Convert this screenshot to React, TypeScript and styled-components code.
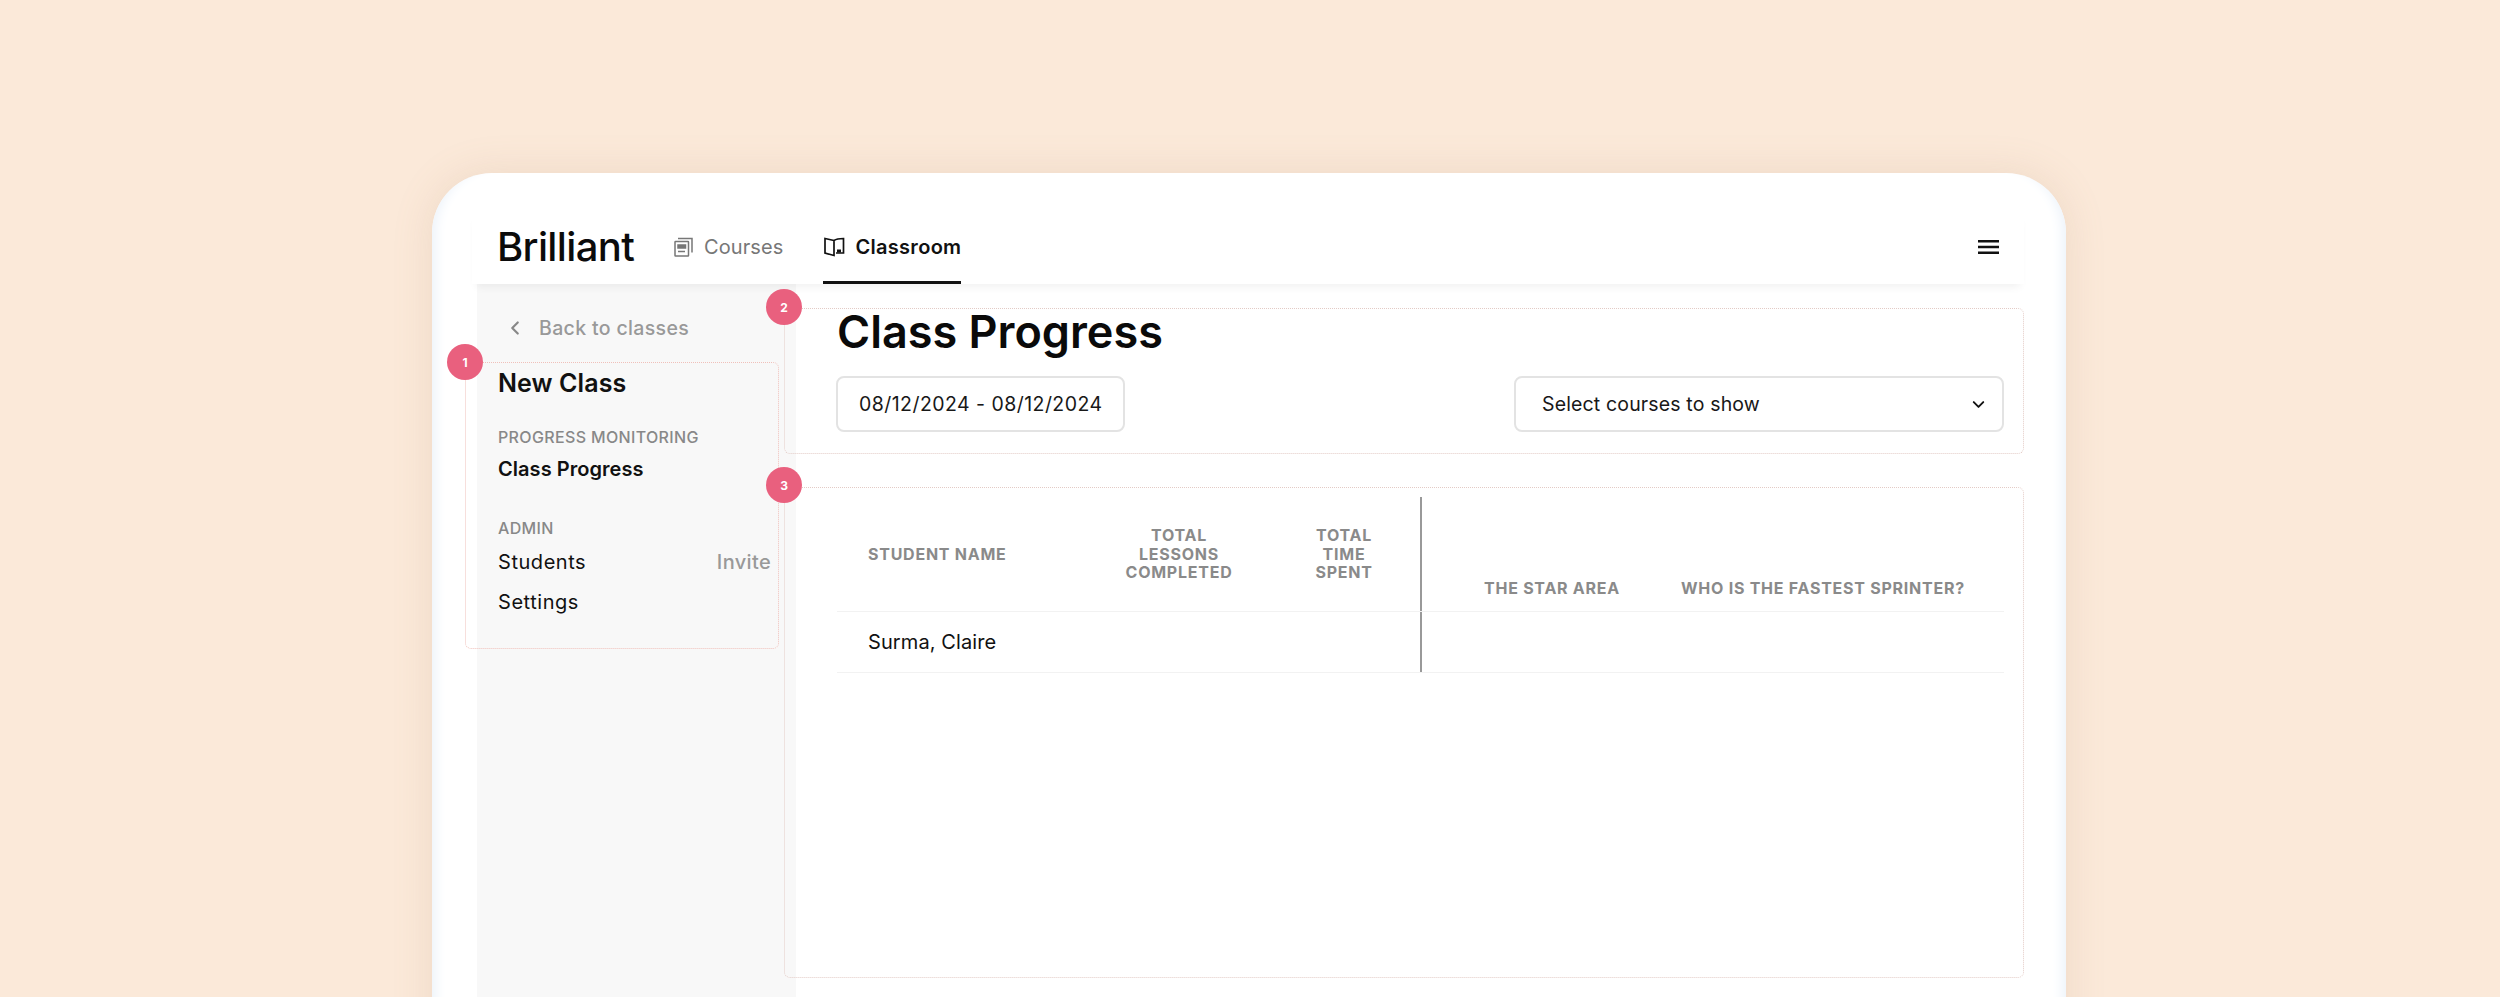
import React from "react";
import styled, { createGlobalStyle } from "styled-components";
import { ChevronLeft, ChevronDown } from "lucide-react";

const Global = createGlobalStyle`
  html, body { margin: 0; padding: 0; background: #fbe9d9; }
  * { box-sizing: border-box; }
  body { font-family: Inter, "Liberation Sans", sans-serif; color: #111; }
`;

const Page = styled.div`
  height: 997px;
  overflow: hidden;
  padding: 173px 434px 0 432px;
  background: #fbe9d9;
`;

const Card = styled.div`
  height: 1000px;
  padding: 37px 42px 0 40px;
  background: #fff;
  border-radius: 60px 60px 0 0;
  box-shadow: 0 0 40px rgba(170, 130, 100, 0.16), inset 14px 0 12px -10px #edf3fa, inset -14px 0 12px -10px #edf3fa;
`;

const Header = styled.header`
  position: relative;
  z-index: 1;
  height: 74px;
  display: flex;
  align-items: stretch;
  padding: 0 25px;
  background: #fff;
  box-shadow: 0 7px 8px -4px rgba(0, 0, 0, 0.06);
`;

const Logo = styled.div`
  align-self: center;
  width: 135px;
  margin-right: 42px;
  font-size: 40px;
  line-height: 1;
  font-weight: 500;
  letter-spacing: -0.65px;
  color: #0b0b0b;
`;

const Tab = styled.div<{ $active?: boolean }>`
  display: flex;
  align-items: center;
  gap: ${(p) => (p.$active ? 10 : 11)}px;
  margin-right: 40px;
  font-size: 20px;
  letter-spacing: ${(p) => (p.$active ? 0.3 : 0.1)}px;
  font-weight: ${(p) => (p.$active ? 600 : 400)};
  color: ${(p) => (p.$active ? "#111" : "#777")};
  padding-top: 3px;
  border-bottom: 3px solid ${(p) => (p.$active ? "#111" : "transparent")};
`;

const Menu = styled.svg`
  align-self: center;
  margin-left: auto;
  width: 21px;
  height: 16px;
`;

const Body = styled.div`
  display: flex;
  align-items: stretch;
  height: 800px;
  padding-left: 5px;
`;

const Sidebar = styled.aside`
  flex: 0 0 319px;
  padding-top: 31px;
  background: #f8f8f8;
`;

const Back = styled.div`
  display: flex;
  align-items: center;
  gap: 13px;
  height: 26px;
  padding-left: 27px;
  font-size: 19.5px;
  letter-spacing: 0.35px;
  font-weight: 500;
  color: #999;
`;

const ClassBox = styled.section`
  position: relative;
  width: 314px;
  height: 287px;
  margin: 21px 0 0 -12px;
  padding: 5px 7px 0 32px;
  border: 1px dotted #f0c0ba;
  border-radius: 6px;
`;

const ClassName = styled.h2`
  margin: 0;
  font-size: 25px;
  line-height: 30px;
  font-weight: 600;
  letter-spacing: 0.1px;
`;

const Group = styled.div<{ $gap: number; $after: number }>`
  margin-top: ${(p) => p.$gap}px;
  margin-bottom: ${(p) => p.$after}px;
  font-size: 16px;
  line-height: 20px;
  font-weight: 500;
  letter-spacing: 0.35px;
  color: #888;
`;

const NavRow = styled.div<{ $strong?: boolean }>`
  display: flex;
  justify-content: space-between;
  height: 40px;
  align-items: center;
  font-size: 20px;
  letter-spacing: ${(p) => (p.$strong ? 0.05 : 0.55)}px;
  font-weight: ${(p) => (p.$strong ? 600 : 400)};
  color: #111;
`;

const Invite = styled.span`
  font-weight: 500;
  letter-spacing: 0.35px;
  color: #999;
`;

const Main = styled.main`
  position: relative;
  flex: 1;
  margin-left: -12px;
  padding-top: 24px;
`;

const TitleBox = styled.section`
  position: relative;
  height: 146px;
  padding: 0 19px 0 51px;
  border: 1px dotted #e3cbc6;
  border-radius: 6px;
`;

const Title = styled.h1`
  margin: 0;
  height: 67px;
  padding-left: 1px;
  font-size: 45px;
  line-height: 46px;
  font-weight: 600;
  color: #0a0a0a;
`;

const Controls = styled.div`
  display: flex;
  justify-content: space-between;
`;

const Field = styled.div<{ $wide?: boolean }>`
  display: flex;
  align-items: center;
  justify-content: space-between;
  width: ${(p) => (p.$wide ? 490 : 289)}px;
  height: 56px;
  padding: 0 ${(p) => (p.$wide ? 14 : 20)}px 0 ${(p) => (p.$wide ? 26 : 21)}px;
  border: 2px solid #e3e3e3;
  border-radius: 8px;
  font-size: 19.5px;
  letter-spacing: ${(p) => (p.$wide ? 0.15 : 0.45)}px;
  color: #181818;
`;

const TableBox = styled.section`
  position: relative;
  height: 491px;
  margin-top: 33px;
  padding: 9px 19px 0 52px;
  border: 1px dotted #e3cbc6;
  border-radius: 6px;
`;

const Row = styled.div<{ $height: number }>`
  display: grid;
  grid-template-columns: 253px 178px 152px 2px 1fr;
  height: ${(p) => p.$height}px;
  border-bottom: 1px solid #f2f2f2;
`;

const Head = styled.div<{ $align?: "start" | "center" | "end" }>`
  display: flex;
  align-items: ${(p) => (p.$align === "end" ? "flex-end" : "center")};
  justify-content: ${(p) => (p.$align === "center" ? "center" : "flex-start")};
  padding-left: ${(p) => (p.$align === "center" ? 0 : 31)}px;
  padding-bottom: ${(p) => (p.$align === "end" ? 14 : 0)}px;
  font-size: 16px;
  line-height: 18.5px;
  font-weight: 700;
  letter-spacing: 0.75px;
  text-align: center;
  color: #8a8a8a;
`;

const Divider = styled.div`
  background: #999;
`;

const Courses = styled.div`
  display: flex;
  gap: 61px;
  padding-left: 62px;
`;

const CourseHead = styled(Head)`
  padding-left: 0;
`;

const Student = styled.div`
  display: flex;
  align-items: center;
  padding-left: 31px;
  font-size: 20px;
  letter-spacing: 0.1px;
  color: #111;
`;

const Badge = styled.div<{ $left: number; $top: number }>`
  position: absolute;
  left: ${(p) => p.$left}px;
  top: ${(p) => p.$top}px;
  z-index: 2;
  display: flex;
  align-items: center;
  justify-content: center;
  width: 36px;
  height: 36px;
  border-radius: 50%;
  background: #e9607e;
  color: #fff;
  font-size: 12px;
  font-weight: 700;
`;

const IconSvg = styled.svg`
  display: block;
  flex: none;
`;

const CoursesIcon = () => (
  <IconSvg width="19" height="20" viewBox="0 0 19 20" fill="none" stroke="#777" strokeWidth="1.5">
    <rect x="1" y="4.5" width="13.5" height="14.5" rx="0.5" />
    <path d="M4 1.5h14v14" />
    <path d="M4 8h7.5v3H4z" fill="#777" />
    <path d="M4 14.500h7" />
  </IconSvg>
);

const BookIcon = () => (
  <IconSvg width="22" height="20" viewBox="0 0 22 20" fill="none" stroke="#111" strokeWidth="1.700">
    <path d="M11 3.500 2 1.500v14.500l9 2.500zM11 3.500c2-1.400 5-2 9.500-2v14.500h-7.500" />
    <path d="M14 12.500h4v3h-4z" fill="#111" stroke="none" />
  </IconSvg>
);

export default function App() {
  return (
    <>
      <Global />
      <Page>
        <Card>
          <Header>
            <Logo>Brilliant</Logo>
            <Tab>
              <CoursesIcon />
              Courses
            </Tab>
            <Tab $active>
              <BookIcon />
              Classroom
            </Tab>
            <Menu viewBox="0 0 21 16" fill="#111">
              <rect y="1" width="21" height="2.500" />
              <rect y="6.750" width="21" height="2.500" />
              <rect y="12.500" width="21" height="2.500" />
            </Menu>
          </Header>
          <Body>
            <Sidebar>
              <Back>
                <ChevronLeft size={22} strokeWidth={2.4} color="#888" />
                Back to classes
              </Back>
              <ClassBox>
                <Badge $left={-19} $top={-19}>1</Badge>
                <ClassName>New Class</ClassName>
                <Group $gap={29} $after={2}>PROGRESS MONITORING</Group>
                <NavRow $strong>Class Progress</NavRow>
                <Group $gap={29} $after={4}>ADMIN</Group>
                <NavRow>
                  Students
                  <Invite>Invite</Invite>
                </NavRow>
                <NavRow>Settings</NavRow>
              </ClassBox>
            </Sidebar>
            <Main>
              <TitleBox>
                <Badge $left={-19} $top={-20}>2</Badge>
                <Title>Class Progress</Title>
                <Controls>
                  <Field>08/12/2024 - 08/12/2024</Field>
                  <Field $wide>
                    Select courses to show
                    <ChevronDown size={19} strokeWidth={2.4} color="#111" />
                  </Field>
                </Controls>
              </TitleBox>
              <TableBox>
                <Badge $left={-19} $top={-21}>3</Badge>
                <Row $height={115}>
                  <Head>STUDENT NAME</Head>
                  <Head $align="center">TOTAL<br />LESSONS<br />COMPLETED</Head>
                  <Head $align="center">TOTAL<br />TIME<br />SPENT</Head>
                  <Divider />
                  <Courses>
                    <CourseHead $align="end">THE STAR AREA</CourseHead>
                    <CourseHead $align="end">WHO IS THE FASTEST SPRINTER?</CourseHead>
                  </Courses>
                </Row>
                <Row $height={61}>
                  <Student>Surma, Claire</Student>
                  <div />
                  <div />
                  <Divider />
                  <div />
                </Row>
              </TableBox>
            </Main>
          </Body>
        </Card>
      </Page>
    </>
  );
}
